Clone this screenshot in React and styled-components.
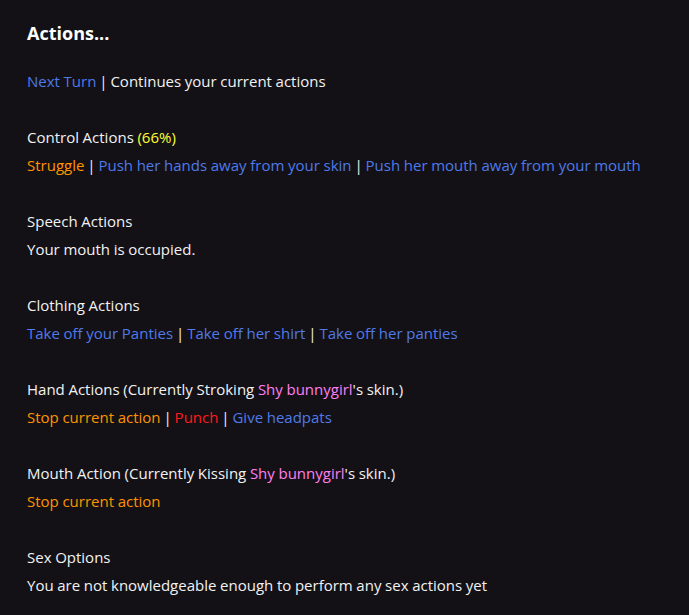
import React from "react";
import styled, { createGlobalStyle } from "styled-components";

const GlobalStyle = createGlobalStyle`
  html, body {
    margin: 0;
    padding: 0;
    background: #131116;
  }
`;

const Panel = styled.div`
  min-height: 100vh;
  box-sizing: border-box;
  padding: 19px 27px 0;
  background: #131116;
  color: #f2f2f2;
  font-family: "Open Sans", "Noto Sans", sans-serif;
  font-size: 15px;
  line-height: 28px;
  word-spacing: -0.25px;
`;

const Heading = styled.h2`
  margin: 0 0 20px;
  font-size: 18px;
  font-weight: 700;
  line-height: 28px;
  color: #ffffff;
  word-spacing: 0;
`;

const Section = styled.div`
  margin-bottom: 28px;

  &:last-child {
    margin-bottom: 0;
  }
`;

const Line = styled.div`
  white-space: nowrap;
`;

const tones = {
  link: "#4f7ae8",
  warn: "#ff9400",
  danger: "#ff1a1a",
  name: "#ff7ff0",
  percent: "#ffff30",
};

const Span = styled.span`
  color: ${(p) => tones[p.$tone] || "inherit"};
  cursor: ${(p) => (p.$tone === "link" || p.$tone === "warn" || p.$tone === "danger" ? "pointer" : "inherit")};
`;

const Pipe = styled.span`
  color: #f4f4f4;
  word-spacing: -1px;
`;

const Sep = () => <Pipe> | </Pipe>;

const ActionList = ({ items }) => (
  <Line>
    {items.map((it, i) => (
      <React.Fragment key={i}>
        {i > 0 && <Sep />}
        <Span $tone={it.tone}>{it.label}</Span>
      </React.Fragment>
    ))}
  </Line>
);

export default function App() {
  return (
    <>
      <GlobalStyle />
      <Panel>
        <Heading>Actions...</Heading>
        <Section>
          <Line>
            <Span $tone="link">Next Turn</Span>
            <Sep />Continues your current actions
          </Line>
        </Section>
        <Section>
          <Line>
            Control Actions <Span $tone="percent">(66%)</Span>
          </Line>
          <ActionList
            items={[
              { label: "Struggle", tone: "warn" },
              { label: "Push her hands away from your skin", tone: "link" },
              { label: "Push her mouth away from your mouth", tone: "link" },
            ]}
          />
        </Section>
        <Section>
          <Line>Speech Actions</Line>
          <Line>Your mouth is occupied.</Line>
        </Section>
        <Section>
          <Line>Clothing Actions</Line>
          <ActionList
            items={[
              { label: "Take off your Panties", tone: "link" },
              { label: "Take off her shirt", tone: "link" },
              { label: "Take off her panties", tone: "link" },
            ]}
          />
        </Section>
        <Section>
          <Line>
            Hand Actions (Currently Stroking <Span $tone="name">Shy bunnygirl</Span>'s skin.)
          </Line>
          <ActionList
            items={[
              { label: "Stop current action", tone: "warn" },
              { label: "Punch", tone: "danger" },
              { label: "Give headpats", tone: "link" },
            ]}
          />
        </Section>
        <Section>
          <Line>
            Mouth Action (Currently Kissing <Span $tone="name">Shy bunnygirl</Span>'s skin.)
          </Line>
          <ActionList items={[{ label: "Stop current action", tone: "warn" }]} />
        </Section>
        <Section>
          <Line>Sex Options</Line>
          <Line>You are not knowledgeable enough to perform any sex actions yet</Line>
        </Section>
      </Panel>
    </>
  );
}
